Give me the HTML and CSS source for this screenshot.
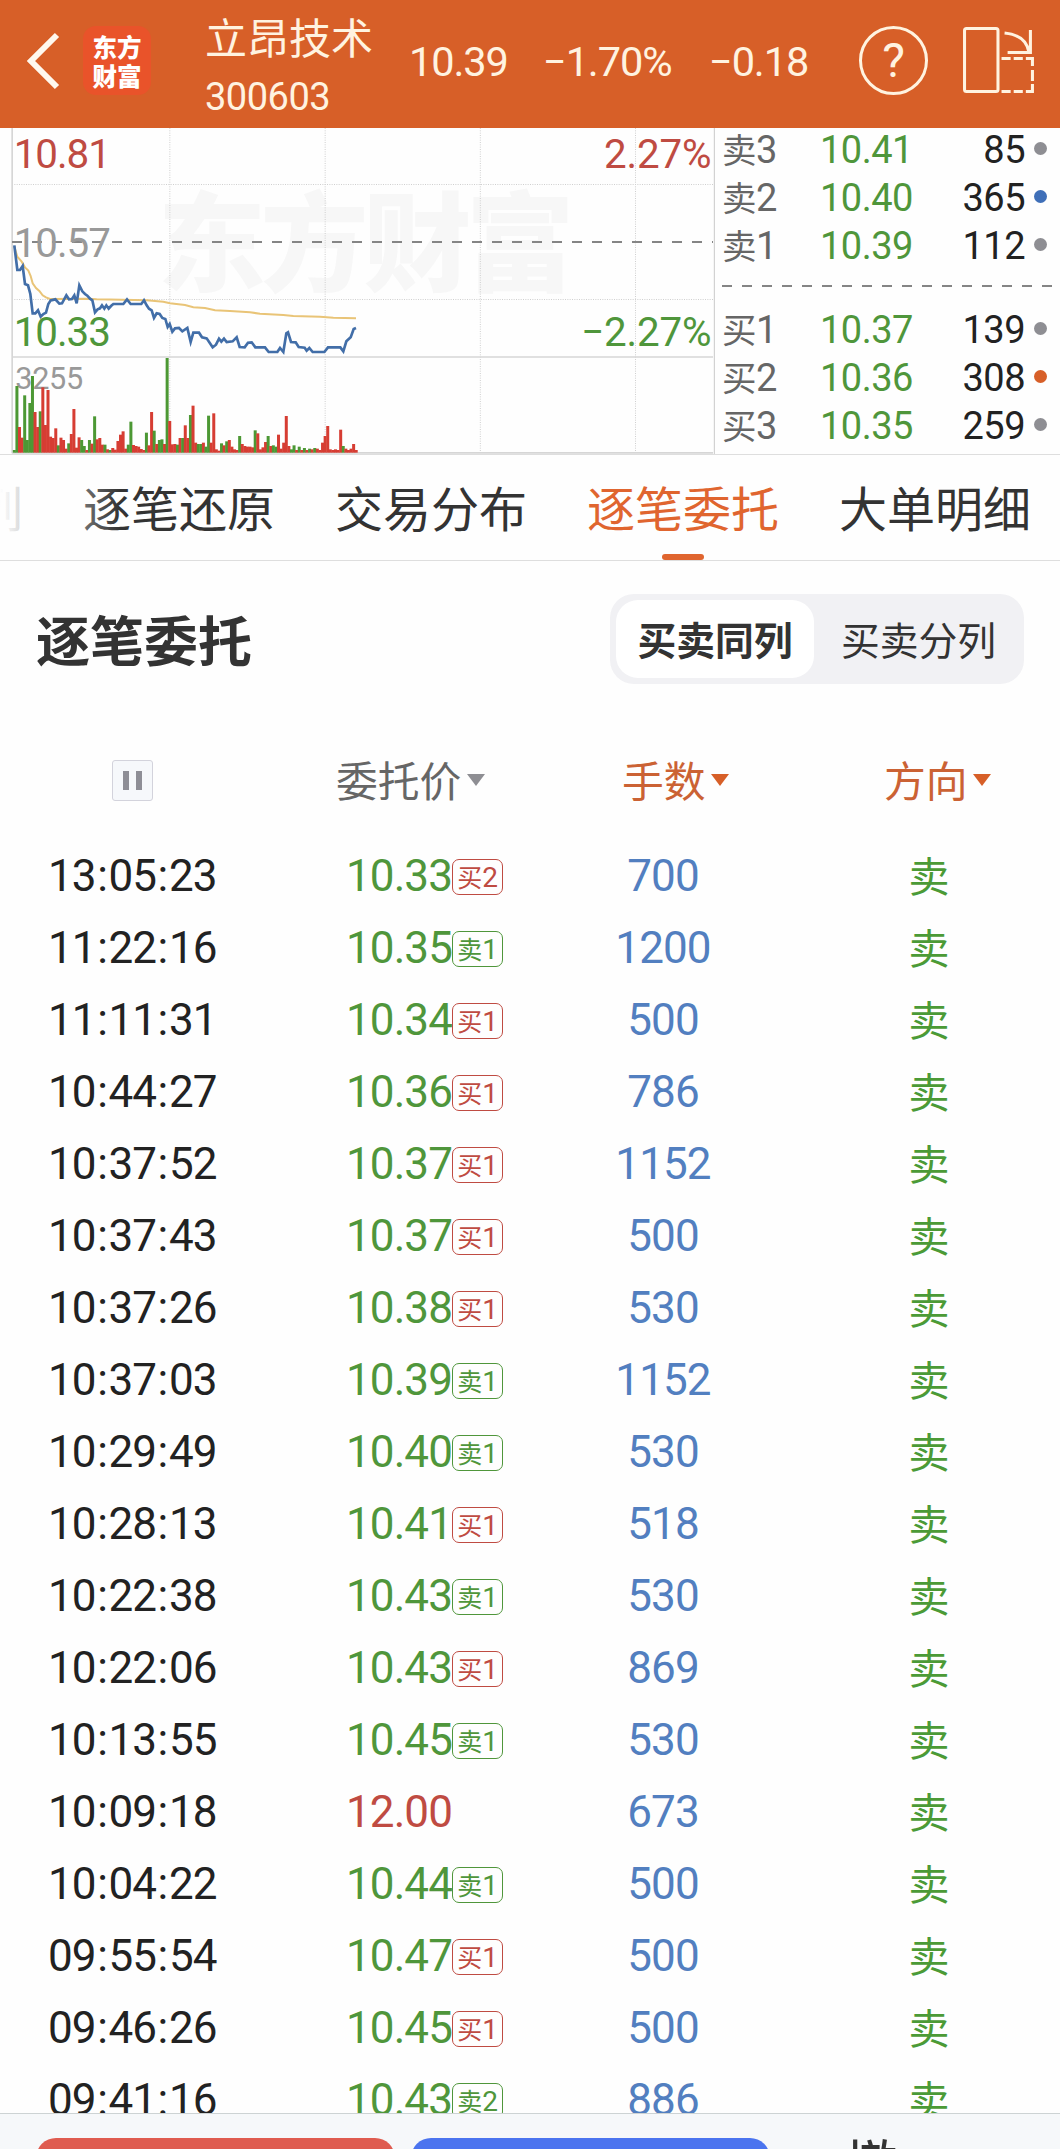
FILE: index.html
```html
<!DOCTYPE html>
<html lang="zh-CN">
<head>
  <meta charset="UTF-8">
  <meta name="viewport" content="width=device-width, initial-scale=1.0">
  <title>立昂技术 300603</title>
  <link rel="stylesheet" href="styles.css">
</head>
<body>
  <div class="app">
    <!-- Header -->
    <header class="header">
      <svg class="back" width="34" height="60" viewBox="0 0 34 60" fill="none" stroke="#fff8ee" stroke-width="6">
        <path d="M31 4 5 30l26 26"/>
      </svg>
      <div class="logo"><span>东方</span><span>财富</span></div>
      <div class="stock">
        <div class="stock-name">立昂技术</div>
        <div class="stock-code">300603</div>
      </div>
      <div class="quote">10.39</div>
      <div class="quote"><i>−</i>1.70%</div>
      <div class="quote"><i>−</i>0.18</div>
      <div class="help">?</div>
      <svg class="rotate" width="75" height="70" viewBox="0 0 74 70" preserveAspectRatio="none" fill="none" stroke="#fff3e0" stroke-width="3">
        <rect x="2.5" y="2.5" width="33" height="63" rx="2"/>
        <path d="M42 7q21 2 24 19M67.500 4v22.500H45"/>
        <path d="M39 32.500h9M51 32.500h9M63 32.500h6.500V40M69.500 44v11M69.500 58v7.500H63M60 65.500h-9M48 65.500h-9"/>
      </svg>
    </header>

    <!-- Chart and order book -->
    <section class="market">
      <svg class="chart" viewBox="0 24 2145 978">
        <text class="watermark" x="473" y="488" textLength="1250">东方财富</text>
        <g class="grid">
          <path d="M36 193.500H2140M36 538.500H2140M509.500 24V998M975.500 24V998M1441 24V998M1906.500 24V998"/>
        </g>
        <path class="axis" d="M36.500 24V1000M36 711H2139M36 998.500H2139"/>
        <path class="edge" d="M2143 24V1002"/>
        <path class="middle" d="M36 366H2139"/>
        <text class="volume-label" x="46" y="808">3255</text>
        <g id="bars"></g>
        <polyline class="average" points="43,380 52,410 65,425 75,442 85,452 92,468 98,490 108,504 118,513 128,526 138,532 150,537 260,536 290,538 440,541 490,545 510,550 555,555 580,562 615,564 645,571 690,573 750,577 780,581 850,585 880,588 960,590 1000,593 1068,595"/>
        <polyline class="price" points="43,376 52,450 60,450 68,438 75,492 84,496 91,522 98,580 106,580 114,571 122,590 130,582 138,578 145,552 152,541 166,538 178,551 186,550 199,526 207,538 216,537 223,526 230,550 238,496 247,514 255,522 262,527 270,536 277,541 285,577 293,568 300,565 306,556 313,566 319,556 326,566 333,558 340,552 370,552 381,538 392,552 424,552 432,541 440,556 447,566 455,571 462,594 470,580 479,582 487,594 496,597 503,621 509,612 517,635 525,625 537,624 547,634 562,624 572,666 580,638 597,638 606,652 620,655 638,682 648,674 657,656 664,665 672,656 680,666 698,664 710,652 719,681 734,682 744,668 755,667 766,682 795,682 806,696 832,696 840,684 850,696 859,640 864,637 873,666 887,667 896,681 914,683 920,692 928,684 938,696 973,696 984,682 1021,682 1030,694 1039,664 1052,652 1061,627 1068,624"/>
        <text class="scale up" x="41" y="143">10.81</text>
        <text class="scale flat" x="41" y="410">10.57</text>
        <text class="scale down" x="41" y="678">10.33</text>
        <text class="scale up end" x="2134" y="143">2.27%</text>
        <text class="scale down end" x="2134" y="678">−2.27%</text>
      </svg>

      <div class="book">
        <div class="level"><span class="side">卖<b>3</b></span><span class="bid">10.41</span><span class="vol">85</span><span class="dot"></span></div>
        <div class="level"><span class="side">卖<b>2</b></span><span class="bid">10.40</span><span class="vol">365</span><span class="dot blue"></span></div>
        <div class="level"><span class="side">卖<b>1</b></span><span class="bid">10.39</span><span class="vol">112</span><span class="dot"></span></div>
        <div class="divider"></div>
        <div class="level"><span class="side">买<b>1</b></span><span class="bid">10.37</span><span class="vol">139</span><span class="dot"></span></div>
        <div class="level"><span class="side">买<b>2</b></span><span class="bid">10.36</span><span class="vol">308</span><span class="dot orange"></span></div>
        <div class="level"><span class="side">买<b>3</b></span><span class="bid">10.35</span><span class="vol">259</span><span class="dot"></span></div>
      </div>
    </section>

    <!-- Tabs -->
    <nav class="tabs">
      <a class="tab">分时成列</a>
      <a class="tab">逐笔还原</a>
      <a class="tab">交易分布</a>
      <a class="tab active">逐笔委托</a>
      <a class="tab">大单明细</a>
    </nav>

    <!-- Title and view switch -->
    <div class="title-bar">
      <h1>逐笔委托</h1>
      <div class="switch">
        <span class="option selected">买卖同列</span>
        <span class="option">买卖分列</span>
      </div>
    </div>

    <!-- Order table -->
    <div class="table-head">
      <div class="pause"><span></span><span></span></div>
      <div class="col">委托价<span class="arrow"></span></div>
      <div class="col sorted">手数<span class="arrow"></span></div>
      <div class="col sorted">方向<span class="arrow"></span></div>
    </div>
    <div class="orders" id="orders"></div>

    <!-- Bottom actions -->
    <footer class="actions">
      <div class="action buy"></div>
      <div class="action sell"></div>
      <div class="cancel">撤</div>
    </footer>
  </div>

  <script src="script.js"></script>
</body>
</html>
```

FILE: styles.css
```css
/* General Styles */
* {
  box-sizing: border-box;
}

body {
  margin: 0;
  background: #fefefe;
  color: #333;
  font-family: 'Noto Sans CJK SC', sans-serif;
}

.app {
  width: 1060px;
  height: 2149px;
  overflow: hidden;
  display: flex;
  flex-direction: column;
}

/* Header */
.header {
  height: 128px;
  flex: none;
  background: #d75f28;
  color: #fff3e0;
  display: grid;
  grid-template-columns: 57px 122px 207px 134px 166px 150px 101px 75px;
  padding-left: 26px;
  align-items: center;
}

.back {
  margin-top: -7px;
}

.logo {
  width: 68px;
  height: 69px;
  margin-top: -7px;
  border-radius: 13px;
  background: #e9532a;
  color: #fff;
  font-size: 24.500px;
  font-weight: 900;
  line-height: 29px;
  display: flex;
  flex-direction: column;
  align-items: center;
  justify-content: center;
}

.stock-name {
  font-size: 42px;
  line-height: 60px;
}

.stock-code {
  font: 38px/56px Roboto, sans-serif;
  letter-spacing: -0.5px;
  padding-top: 3px;
  margin-bottom: -3px;
}

.quote {
  font: 41.5px/60px Roboto, sans-serif;
  letter-spacing: -1.1px;
  margin: -4px 0 0 -3px;
}

.quote i {
  font-style: normal;
}

.help {
  width: 69px;
  height: 69px;
  margin-top: -7px;
  margin-left: -3px;
  border: 3px solid #fff3e0;
  border-radius: 50%;
  font: 48px/63px Roboto, sans-serif;
  text-align: center;
}

.rotate {
  margin: -6px 0 0 -1px;
}

/* Chart and order book */
.market {
  height: 327px;
  flex: none;
  display: flex;
  border-bottom: 1px solid #dedede;
}

.chart {
  width: 715px;
  height: 326px;
  flex: none;
  font-family: Roboto, sans-serif;
}

.watermark {
  font: 900 324px 'Noto Sans CJK SC', sans-serif;
  fill: #f7f7f7;
}

.grid {
  fill: none;
  stroke: #cfcfcf;
  stroke-width: 3;
  stroke-dasharray: 3 4;
}

.axis {
  fill: none;
  stroke: #d6d6d6;
  stroke-width: 5;
}

.edge {
  stroke: #c9c9c9;
  stroke-width: 3;
}

.middle {
  stroke: #858585;
  stroke-width: 6;
  stroke-dasharray: 30 30;
}

.average,
.price {
  fill: none;
  stroke: #e9c477;
  stroke-width: 6;
}

.price {
  stroke: #426ea8;
  stroke-width: 8;
}

.scale {
  font-size: 121px;
  letter-spacing: -3px;
}

.volume-label {
  font-size: 92px;
  letter-spacing: -1px;
  fill: #999;
}

.end {
  letter-spacing: -0.5px;
  text-anchor: end;
}

.up {
  fill: #bf4b42;
}

.down {
  fill: #4f963b;
}

.flat {
  fill: #999;
}

.bar-r {
  fill: #d63d33;
}

.bar-g {
  fill: #4c9834;
}

.book {
  flex: 1;
  margin-top: -3px;
  padding-left: 7px;
}

.level {
  height: 48px;
  display: grid;
  grid-template-columns: 98px 110px 95px 13px;
  align-items: center;
  font: 38px/48px Roboto, sans-serif;
  letter-spacing: -0.5px;
}

.side {
  height: 48px;
  margin-top: -3px;
  color: #666;
  font-family: 'Noto Sans CJK SC', sans-serif;
  font-size: 34.5px;
}

.side b {
  font: 38px Roboto, sans-serif;
}

.bid {
  padding-top: 1px;
  color: #4f963b;
}

.vol {
  padding-top: 1px;
  color: #222;
  text-align: right;
}

.dot {
  width: 13px;
  height: 13px;
  margin: -2px 0 0 9px;
  border-radius: 50%;
  background: #8e8e93;
}

.dot.blue {
  background: #3f6fb8;
}

.dot.orange {
  background: #d75f28;
}

.divider {
  height: 2px;
  margin: 16px 6px 18px 0;
  background: repeating-linear-gradient(90deg, #858585 0 10px, transparent 10px 20px);
}

/* Tabs */
.tabs {
  position: relative;
  height: 106px;
  flex: none;
  display: flex;
  gap: 60px;
  margin-left: -169px;
  border-bottom: 1px solid #dedede;
}

.tabs::after {
  content: '';
  position: absolute;
  left: 169px;
  top: 0;
  width: 120px;
  height: 100px;
  background: linear-gradient(90deg, #fefefe, rgba(254, 254, 254, 0));
}

.tab {
  flex: none;
  display: flex;
  flex-direction: column;
  align-items: center;
  padding-top: 1px;
  font-size: 48px;
  line-height: 100px;
}

.tab.active {
  color: #e0652f;
}

.tab.active::after {
  content: '';
  width: 42px;
  height: 6px;
  margin-top: -2px;
  border-radius: 3px;
  background: #e0652f;
}

/* Title and view switch */
.title-bar {
  flex: none;
  height: 157px;
  padding: 0 36px 2px;
  display: flex;
  align-items: center;
  justify-content: space-between;
}

h1 {
  margin: 0;
  font-size: 54px;
  line-height: 80px;
}

.switch {
  width: 414px;
  height: 90px;
  padding: 6px;
  border-radius: 24px;
  background: #f1f1f4;
  display: flex;
}

.option {
  flex: 1;
  padding-left: 5px;
  font-size: 38.8px;
  line-height: 76px;
  text-align: center;
}

.option.selected {
  flex: none;
  width: 198px;
  padding-left: 0;
  border-radius: 22px;
  background: #fff;
  font-weight: bold;
}

/* Order table */
.table-head {
  flex: none;
  height: 122px;
  padding: 0 0 0 112px;
  display: grid;
  grid-template-columns: 224px 286px 262px 1fr;
  align-items: center;
  color: #666;
  font-size: 41.8px;
}

.pause {
  width: 41px;
  height: 41px;
  margin-top: 2px;
  border: 1px solid #d3d3dc;
  border-radius: 3px;
  background: #f6f8fb;
  display: flex;
  align-items: center;
  justify-content: center;
  gap: 7px;
}

.pause span {
  width: 6px;
  height: 19px;
  background: #8e8e96;
}

.col {
  height: 60px;
  margin-top: -1px;
  display: flex;
  align-items: center;
}

.arrow {
  margin: 2px 0 0 6px;
  border: 9px solid transparent;
  border-top: 12px solid #8e8e93;
  border-bottom: 0;
}

.sorted {
  color: #cb6234;
}

.sorted .arrow {
  margin-left: 5px;
  border-top-color: #d75f28;
}

.orders {
  flex: 1;
  min-height: 0;
  overflow: hidden;
}

.order {
  height: 72px;
  padding-left: 48px;
  display: grid;
  grid-template-columns: 298px 216px 202px 1fr;
  align-items: center;
  font: 44px/72px Roboto, sans-serif;
  letter-spacing: -0.9px;
}

.time {
  color: #222;
}

.time i {
  font-style: normal;
  padding: 0 1.5px;
}

.amount {
  display: flex;
  align-items: center;
}

.amount.fall {
  color: #4f963b;
}

.amount.rise {
  color: #bf4b42;
}

.tag {
  width: 51px;
  height: 36px;
  margin-top: 1px;
  border: 1px solid;
  border-radius: 7px;
  font: 25px/32px 'Noto Sans CJK SC', sans-serif;
  letter-spacing: 0;
  text-align: center;
  white-space: nowrap;
}

.tag b {
  font: 28px Roboto, sans-serif;
}

.tag.buy {
  color: #bf4b42;
}

.tag.sell {
  color: #4f963b;
}

.lots {
  color: #527fc0;
  text-align: center;
}

.direction {
  height: 72px;
  margin: -4px 0 0 64px;
  width: 201px;
  color: #4b9a36;
  font: 41px/72px 'Noto Sans CJK SC', sans-serif;
  text-align: center;
}

/* Bottom actions */
.actions {
  flex: none;
  height: 36px;
  padding: 24px 0 0 36px;
  border-top: 1px solid #cdd3d4;
  background: #f6f8fa;
  display: flex;
  gap: 16px;
}

.action {
  width: 359px;
  height: 80px;
  flex: none;
  border-radius: 20px;
}

.action.buy {
  background: #df5c50;
}

.action.sell {
  background: #4b74ef;
}

.cancel {
  margin: -7px 0 0 60px;
  font-size: 51px;
  font-weight: 500;
  line-height: 60px;
}
```

FILE: script.js
```js
// Volume bars, one per minute: colour and height
const volumes = 'g8 g200 r77 r45 g172 g38 g149 g230 r122 r77 g124 r196 r83 r188 r48 r44 r73 g22 r45 r38 r12 g28 r56 r131 r15 r46 g38 g20 r8 g38 r27 g109 r40 r44 r24 g24 r10 g8 r14 r9 r35 r54 r64 r12 g24 g93 r23 r20 r18 r11 r8 g60 r22 r122 g66 r26 g38 g40 r26 g284 r95 r25 r26 g24 r44 g44 r82 r44 g113 r141 r30 g26 g26 r30 g18 g111 r30 r118 r10 r6 g28 r22 g34 r38 r18 r10 r8 g50 r26 r20 r18 r18 r16 g67 r58 r10 r16 r32 g50 r20 g22 g18 r54 r12 r30 r110 r20 g10 g22 r8 g18 r8 g14 r8 g12 r10 g14 r12 r8 r30 r50 r80 r10 r8 r10 r8 r69 g20 r12 r8 r12 r26 r8';

document.getElementById('bars').innerHTML = volumes.split(' ').map((item, i) => {
  const height = Number(item.slice(1));
  return `<rect class="bar-${item[0]}" x="${38.500 + i * 7.77}" y="${998 - height}" width="9" height="${height}"/>`;
}).join('');

// time, price, level, lots
const orders = [
  ['13:05:23', '10.33', '买2', 700],
  ['11:22:16', '10.35', '卖1', 1200],
  ['11:11:31', '10.34', '买1', 500],
  ['10:44:27', '10.36', '买1', 786],
  ['10:37:52', '10.37', '买1', 1152],
  ['10:37:43', '10.37', '买1', 500],
  ['10:37:26', '10.38', '买1', 530],
  ['10:37:03', '10.39', '卖1', 1152],
  ['10:29:49', '10.40', '卖1', 530],
  ['10:28:13', '10.41', '买1', 518],
  ['10:22:38', '10.43', '卖1', 530],
  ['10:22:06', '10.43', '买1', 869],
  ['10:13:55', '10.45', '卖1', 530],
  ['10:09:18', '12.00', '', 673],
  ['10:04:22', '10.44', '卖1', 500],
  ['09:55:54', '10.47', '买1', 500],
  ['09:46:26', '10.45', '买1', 500],
  ['09:41:16', '10.43', '卖2', 886]
];

document.getElementById('orders').innerHTML = orders.map(([time, price, level, lots]) => {
  const trend = Number(price) > 10.57 ? 'rise' : 'fall';
  const side = level[0] === '买' ? 'buy' : 'sell';
  const tag = level ? `<span class="tag ${side}">${level[0]}<b>${level[1]}</b></span>` : '';
  return `<div class="order">
    <span class="time">${time.replace(/:/g, '<i>:</i>')}</span>
    <span class="amount ${trend}">${price}${tag}</span>
    <span class="lots">${lots}</span>
    <span class="direction">卖</span>
  </div>`;
}).join('');
```
